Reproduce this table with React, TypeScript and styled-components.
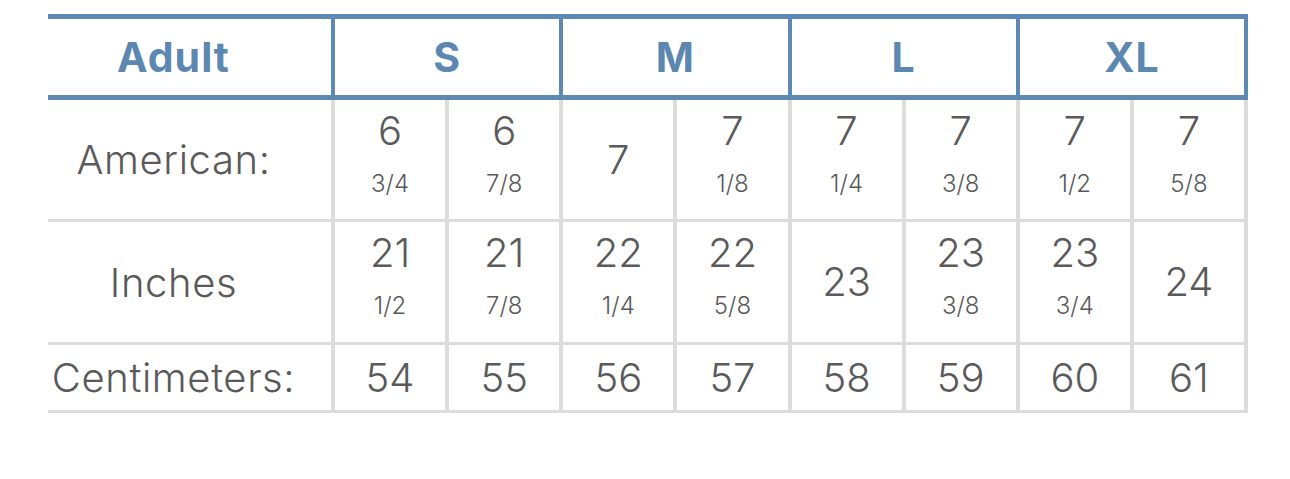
import React from 'react';
import styled, { createGlobalStyle } from 'styled-components';

type Size = { whole: string; frac?: string };

const sizeGroups = ['S', 'M', 'L', 'XL'];

const rows: { label: string; height: number; values: Size[] }[] = [
  {
    label: 'American:',
    height: 119,
    values: [
      { whole: '6', frac: '3/4' },
      { whole: '6', frac: '7/8' },
      { whole: '7' },
      { whole: '7', frac: '1/8' },
      { whole: '7', frac: '1/4' },
      { whole: '7', frac: '3/8' },
      { whole: '7', frac: '1/2' },
      { whole: '7', frac: '5/8' },
    ],
  },
  {
    label: 'Inches',
    height: 120,
    values: [
      { whole: '21', frac: '1/2' },
      { whole: '21', frac: '7/8' },
      { whole: '22', frac: '1/4' },
      { whole: '22', frac: '5/8' },
      { whole: '23' },
      { whole: '23', frac: '3/8' },
      { whole: '23', frac: '3/4' },
      { whole: '24' },
    ],
  },
  {
    label: 'Centimeters:',
    height: 65,
    values: ['54', '55', '56', '57', '58', '59', '60', '61'].map(v => ({ whole: v })),
  },
];

const SizeChart = () => {
  return (
    <Wrapper>
      <GlobalStyle />
      <Table>
        <colgroup>
          <col style={{ width: 285 }} />
          {Array.from({ length: 8 }).map((_, i) => (
            <col key={i} />
          ))}
        </colgroup>
        <thead>
          <tr>
            <HeadCell className='first'>Adult</HeadCell>
            {sizeGroups.map(size => (
              <HeadCell key={size} colSpan={2}>
                {size}
              </HeadCell>
            ))}
          </tr>
        </thead>
        <tbody>
          {rows.map(row => (
            <tr key={row.label}>
              <LabelCell $height={row.height}>{row.label}</LabelCell>
              {row.values.map((v, i) => (
                <ValueCell key={i} $height={row.height}>
                  {v.frac ? (
                    <>
                      <span className='whole'>{v.whole}</span>
                      <span className='frac'>{v.frac}</span>
                    </>
                  ) : (
                    <span className='single'>{v.whole}</span>
                  )}
                </ValueCell>
              ))}
            </tr>
          ))}
        </tbody>
      </Table>
    </Wrapper>
  );
};

const GlobalStyle = createGlobalStyle`
  body {
    margin: 0;
    background: #fff;
    font-family: Inter, "Open Sans", sans-serif;
  }
`;

const Wrapper = styled.div`
  padding: 14px 0 0 48px;
`;

const Table = styled.table`
  width: 1200px;
  table-layout: fixed;
  border-collapse: collapse;
  color: #5a5a5a;
`;

const HeadCell = styled.th`
  height: 76px;
  padding: 0;
  border-top: 5px solid #5e89b3;
  border-bottom: 5px solid #5e89b3;
  border-left: 4px solid #5e89b3;
  border-right: 4px solid #5e89b3;
  color: #5b87b1;
  font-size: 41px;
  font-weight: 700;
  letter-spacing: 1px;
  text-align: center;
  vertical-align: middle;

  &.first {
    border-left: none;
    padding-right: 32px;
  }
`;

const LabelCell = styled.td<{ $height: number }>`
  height: ${p => p.$height}px;
  padding: 0 32px 0 0;
  border-top: 3px solid #dcdcdc;
  border-bottom: 3px solid #dcdcdc;
  border-right: 4px solid #dcdcdc;
  font-size: 40px;
  font-weight: 300;
  text-align: center;
  white-space: nowrap;
  letter-spacing: 0.6px;
`;

const ValueCell = styled.td<{ $height: number }>`
  height: ${p => p.$height}px;
  padding: 0;
  border: 3px solid #dcdcdc;
  border-left-width: 4px;
  border-right-width: 4px;
  text-align: center;
  vertical-align: middle;
  font-weight: 300;

  .whole,
  .frac,
  .single {
    display: block;
  }

  .whole {
    font-size: 40px;
    line-height: 48px;
  }

  .frac {
    font-size: 24px;
    line-height: 58px;
  }

  .single {
    font-size: 40px;
    line-height: 48px;
  }
`;

export default SizeChart;
